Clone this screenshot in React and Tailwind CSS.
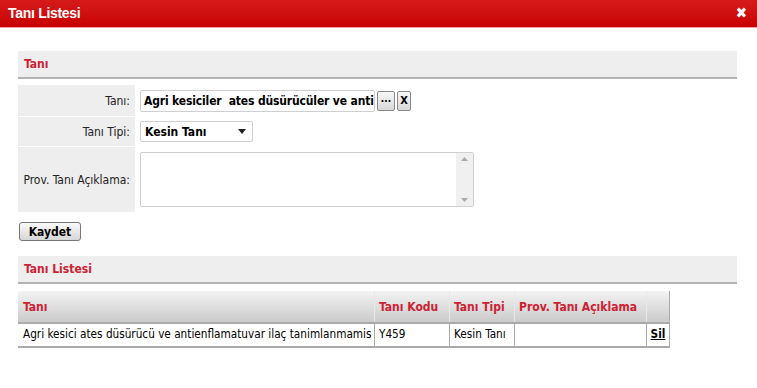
export default function App() {
  const font = { fontFamily: '"DejaVu Sans Condensed", "DejaVu Sans", "Liberation Sans", sans-serif' };
  return (
    <div className="w-[757px] h-[388px] bg-white overflow-hidden" style={font}>
      {/* title bar */}
      <div className="h-[28px] flex items-center justify-between pl-[8px] pr-[6px] bg-gradient-to-b from-[#d61a1a] to-[#c80000] border-b border-[#f0a0a0]">
        <span className="text-white font-bold text-[14px] [font-family:'Liberation_Sans',sans-serif] tracking-[-0.3px]">
          Tanı Listesi
        </span>
        <span className="text-white font-bold text-[15px] leading-none mr-[4px]">✖</span>
      </div>

      <div className="pl-[18px] pr-[20px] pt-[23px]">
        {/* section header */}
        <div className="h-[28px] bg-[#eeeeee] border-b-2 border-[#b3b3b3] flex items-center pl-[6px]">
          <span className="text-[#cc2233] font-bold text-[12px]">Tanı</span>
        </div>

        {/* form */}
        <div className="mt-[6px] flex flex-col gap-px">
          <div className="flex h-[31px]">
            <div className="w-[117px] bg-[#eeeeee] flex items-center justify-end pr-[5px] text-[12px] text-[#222]">Tanı:</div>
            <div className="flex items-center pl-[5px] gap-[2px]">
              <div className="w-[235px] h-[22px] border border-[#cfcfcf] rounded-[2px] flex items-center pl-[3px] text-[12px] font-bold text-black overflow-hidden whitespace-nowrap tracking-[-0.15px]">
                Agri kesiciler&nbsp; ates düsürücüler ve anti
              </div>
              <div className="w-[18px] h-[20px] border border-[#888] rounded-[2px] bg-gradient-to-b from-[#f8f8f8] to-[#d8d8d8] flex items-center justify-center text-[10px] font-bold leading-none pb-[3px] overflow-hidden">...</div>
              <div className="w-[14px] h-[20px] border border-[#888] rounded-[2px] bg-gradient-to-b from-[#f8f8f8] to-[#d8d8d8] flex items-center justify-center text-[11px] font-bold leading-none overflow-hidden">X</div>
            </div>
          </div>
          <div className="flex h-[29px]">
            <div className="w-[117px] bg-[#eeeeee] flex items-center justify-end pr-[5px] text-[12px] text-[#222]">Tanı Tipi:</div>
            <div className="flex items-center pl-[5px]">
              <div className="w-[113px] h-[21px] border border-[#cfcfcf] rounded-[2px] flex items-center justify-between px-[4px] text-[12px] font-bold text-black">
                <span>Kesin Tanı</span>
                <svg width="8" height="5" viewBox="0 0 8 5" className="mr-[2px]"><path d="M0 0h8L4 5z" fill="#222" /></svg>
              </div>
            </div>
          </div>
          <div className="flex h-[65px]">
            <div className="w-[117px] bg-[#eeeeee] flex items-center justify-end pr-[5px] text-[12px] text-[#222] whitespace-nowrap">Prov. Tanı Açıklama:</div>
            <div className="flex items-center pl-[5px]">
              <div className="w-[334px] h-[55px] border border-[#cfcfcf] rounded-[2px] flex justify-end">
                <div className="w-[17px] h-full bg-[#f0f0f0] flex flex-col items-center justify-between py-[4px]">
                  <svg width="7" height="4" viewBox="0 0 7 4"><path d="M0 4h7L3.5 0z" fill="#aaa" /></svg>
                  <svg width="7" height="4" viewBox="0 0 7 4"><path d="M0 0h7L3.5 4z" fill="#aaa" /></svg>
                </div>
              </div>
            </div>
          </div>
        </div>

        <div className="mt-[10px]">
          <button className="w-[62px] h-[19px] border border-[#777] rounded-[3px] bg-gradient-to-b from-[#fafafa] to-[#d6d6d6] text-[12px] font-bold text-black leading-none flex items-center justify-center ml-px">
            Kaydet
          </button>
        </div>

        <div className="mt-[15px] h-[28px] bg-[#eeeeee] border-b-2 border-[#b3b3b3] flex items-center pl-[6px]">
          <span className="text-[#cc2233] font-bold text-[12px]">Tanı Listesi</span>
        </div>

        {/* table */}
        <div className="mt-[7px] w-[652px] border-b-2 border-[#aaaaaa]">
          <div className="flex h-[33px] bg-gradient-to-b from-[#f3f3f3] to-[#cbcbcb] border-b-2 border-[#aaaaaa] text-[12px] font-bold text-[#cc2233]">
            <div className="w-[357px] flex items-center pl-[5px] border-r border-[#e8e8e8]">Tanı</div>
            <div className="w-[75px] flex items-center pl-[4px] border-r border-[#e8e8e8]">Tanı Kodu</div>
            <div className="w-[65px] flex items-center pl-[4px] border-r border-[#e8e8e8]">Tanı Tipi</div>
            <div className="w-[132px] flex items-center pl-[4px] border-r border-[#e8e8e8]">Prov. Tanı Açıklama</div>
            <div className="w-[23px] border-r border-[#aaaaaa]"></div>
          </div>
          <div className="flex h-[22px] text-[11.7px] text-black">
            <div className="w-[357px] flex items-center pl-[5px] border-r border-[#aaaaaa] whitespace-nowrap">Agri kesici ates düsürücü ve antienflamatuvar ilaç tanimlanmamis</div>
            <div className="w-[75px] flex items-center pl-[4px] border-r border-[#aaaaaa]">Y459</div>
            <div className="w-[65px] flex items-center pl-[4px] border-r border-[#aaaaaa]">Kesin Tanı</div>
            <div className="w-[132px] border-r border-[#aaaaaa]"></div>
            <div className="w-[23px] flex items-center justify-center border-r border-[#aaaaaa] font-bold underline">Sil</div>
          </div>
        </div>
      </div>
    </div>
  );
}
